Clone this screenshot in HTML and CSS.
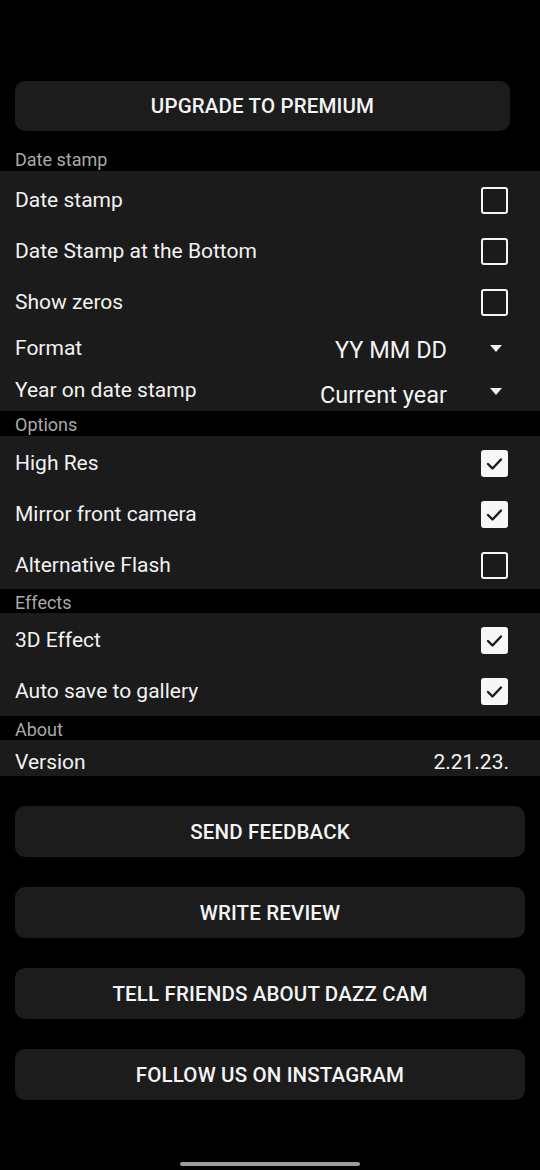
FILE: index.html
```html
<!DOCTYPE html>
<html lang="en">
<head>
<meta charset="utf-8">
<meta name="viewport" content="width=540">
<title>Settings</title>
<link rel="stylesheet" href="styles.css">
</head>
<body>
<main class="screen">
  <button class="btn btn-premium">UPGRADE TO PREMIUM</button>

  <section class="group group-first">
    <h2 class="group-title">Date stamp</h2>
    <div class="panel panel-date">
      <div class="row"><span class="label">Date stamp</span><span class="check"></span></div>
      <div class="row"><span class="label">Date Stamp at the Bottom</span><span class="check"></span></div>
      <div class="row"><span class="label">Show zeros</span><span class="check"></span></div>
      <div class="row row-spin row-format"><span class="label">Format</span><span class="spin"><span class="spin-value">YY MM DD</span><span class="caret"></span></span></div>
      <div class="row row-spin row-year"><span class="label">Year on date stamp</span><span class="spin"><span class="spin-value">Current year</span><span class="caret"></span></span></div>
    </div>
  </section>

  <section class="group">
    <h2 class="group-title">Options</h2>
    <div class="panel">
      <div class="row"><span class="label">High Res</span><span class="check on"><svg viewBox="0 0 27 27"><path d="M7 14 L11.5 18.5 L20 9.5"/></svg></span></div>
      <div class="row"><span class="label">Mirror front camera</span><span class="check on"><svg viewBox="0 0 27 27"><path d="M7 14 L11.5 18.5 L20 9.5"/></svg></span></div>
      <div class="row"><span class="label">Alternative Flash</span><span class="check"></span></div>
    </div>
  </section>

  <section class="group">
    <h2 class="group-title title-short">Effects</h2>
    <div class="panel panel-effects">
      <div class="row"><span class="label">3D Effect</span><span class="check on"><svg viewBox="0 0 27 27"><path d="M7 14 L11.5 18.5 L20 9.5"/></svg></span></div>
      <div class="row"><span class="label">Auto save to gallery</span><span class="check on"><svg viewBox="0 0 27 27"><path d="M7 14 L11.5 18.5 L20 9.5"/></svg></span></div>
    </div>
  </section>

  <section class="group">
    <h2 class="group-title title-short">About</h2>
    <div class="panel">
      <div class="row row-version"><span class="label">Version</span><span class="value">2.21.23.</span></div>
    </div>
  </section>

  <div class="actions">
    <button class="btn">SEND FEEDBACK</button>
    <button class="btn">WRITE REVIEW</button>
    <button class="btn">TELL FRIENDS ABOUT DAZZ CAM</button>
    <button class="btn">FOLLOW US ON INSTAGRAM</button>
  </div>

  <div class="home-bar"></div>
</main>
</body>
</html>
```

FILE: styles.css
```css
* { box-sizing: border-box; }

html, body {
  margin: 0;
  padding: 0;
  background: #000;
}

body {
  font-family: Roboto, "Noto Sans", "Liberation Sans", sans-serif;
  color: #f2f2f2;
}

.screen {
  width: 540px;
  height: 1170px;
  padding-top: 81px;
  display: flex;
  flex-direction: column;
  position: relative;
}

.btn {
  display: flex;
  align-items: center;
  justify-content: center;
  border: none;
  background: #1c1c1c;
  color: #f4f4f4;
  font-family: Roboto, "Noto Sans", "Liberation Sans", sans-serif;
  font-size: 20.5px;
  font-weight: 500;
  letter-spacing: 0.15px;
  border-radius: 10px;
  height: 51px;
  margin: 0 15px;
  padding: 0;
}

.btn-premium {
  width: 495px;
  height: 50px;
}

.group-first {
  margin-top: 15px;
}

.group-title {
  margin: 0;
  height: 25px;
  line-height: 22px;
  padding: 3px 0 0 15px;
  font-size: 18px;
  font-weight: 400;
  color: #a9a9a9;
}

.title-short {
  height: 24px;
}

.panel {
  background: #1b1b1b;
  display: flex;
  flex-direction: column;
}

.panel-date {
  padding-top: 2px;
}

.panel-effects {
  padding-bottom: 1px;
}

.row {
  height: 51px;
  display: flex;
  align-items: center;
  justify-content: space-between;
  padding: 3px 32px 0 15px;
  font-size: 21px;
}

.label {
  color: #f2f2f2;
}

.row-format { height: 43px; padding-top: 0; }
.row-year { height: 42px; padding-top: 0; }
.row-version { height: 36px; padding-top: 8px; padding-right: 31px; }

.check {
  width: 27px;
  height: 27px;
  border: 2.5px solid #f4f4f4;
  border-radius: 3px;
  display: flex;
  align-items: center;
  justify-content: center;
  flex-shrink: 0;
}

.check.on {
  background: #f7f7f7;
  border-color: #f7f7f7;
}

.check svg {
  width: 27px;
  height: 27px;
  flex-shrink: 0;
}

.check svg path {
  fill: none;
  stroke: #1a1a1a;
  stroke-width: 2.4;
  stroke-linecap: round;
  stroke-linejoin: round;
}

.spin {
  display: flex;
  align-items: center;
}

.spin-value {
  font-size: 23.5px;
  color: #f4f4f4;
  padding-top: 5px;
}

.caret {
  width: 0;
  height: 0;
  border-left: 6.5px solid transparent;
  border-right: 6.5px solid transparent;
  border-top: 7px solid #f0f0f0;
  margin-left: 43px;
  margin-right: 6px;
  margin-top: 2px;
}

.row-year .spin-value { padding-top: 9px; }

.value {
  font-size: 21px;
  color: #f2f2f2;
}

.actions {
  margin-top: 30px;
  display: flex;
  flex-direction: column;
  gap: 30px;
}

.home-bar {
  position: absolute;
  left: 180px;
  top: 1162px;
  width: 180px;
  height: 4px;
  border-radius: 2px;
  background: #9c9c9c;
}
```
